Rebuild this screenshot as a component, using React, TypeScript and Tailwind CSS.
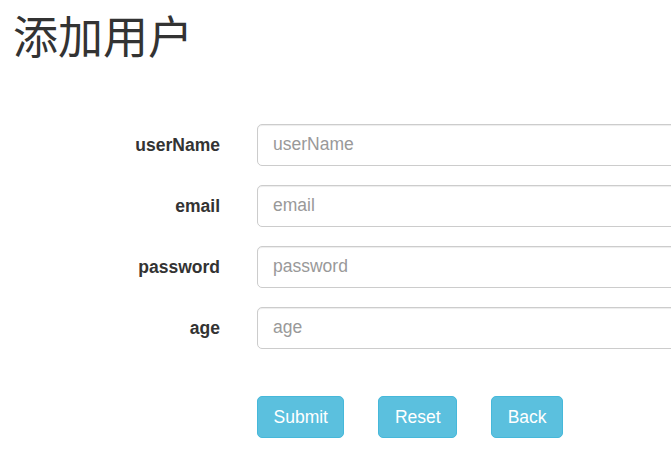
export default function App() {
  const fields = ['userName', 'email', 'password', 'age'];

  return (
    <div className="h-[456px] w-[671px] overflow-hidden bg-white font-['Liberation_Sans',Arial,sans-serif] text-[17.5px] text-[#333]">
      <div className="px-[13px]">
        <h1 className="pt-[14px] font-['Liberation_Sans','Noto_Sans_CJK_SC',sans-serif] text-[45px] leading-[1.1] font-normal">
          添加用户
        </h1>
      </div>

      <form className="mt-[60px] flex flex-col gap-[18.5px]">
        {fields.map((f) => (
          <div key={f} className="flex items-center gap-[37px]">
            <label className="w-[220px] shrink-0 text-right font-bold">{f}</label>
            <input
              type={f === 'password' ? 'password' : 'text'}
              placeholder={f}
              className="h-[42.5px] w-[500px] shrink-0 rounded-[5px] border border-[#ccc] px-[15px] text-[17.5px] text-[#555] shadow-[inset_0_1px_1px_rgba(0,0,0,0.075)] outline-none placeholder:text-[#999]"
            />
          </div>
        ))}

        <div className="mt-[28px] flex gap-[34px] pl-[257px]">
          {['Submit', 'Reset', 'Back'].map((b) => (
            <button
              key={b}
              type="button"
              className="h-[42.5px] rounded-[5px] border border-[#46b8da] bg-[#5bc0de] px-[15.5px] text-[17.5px] text-white"
            >
              {b}
            </button>
          ))}
        </div>
      </form>
    </div>
  );
}
